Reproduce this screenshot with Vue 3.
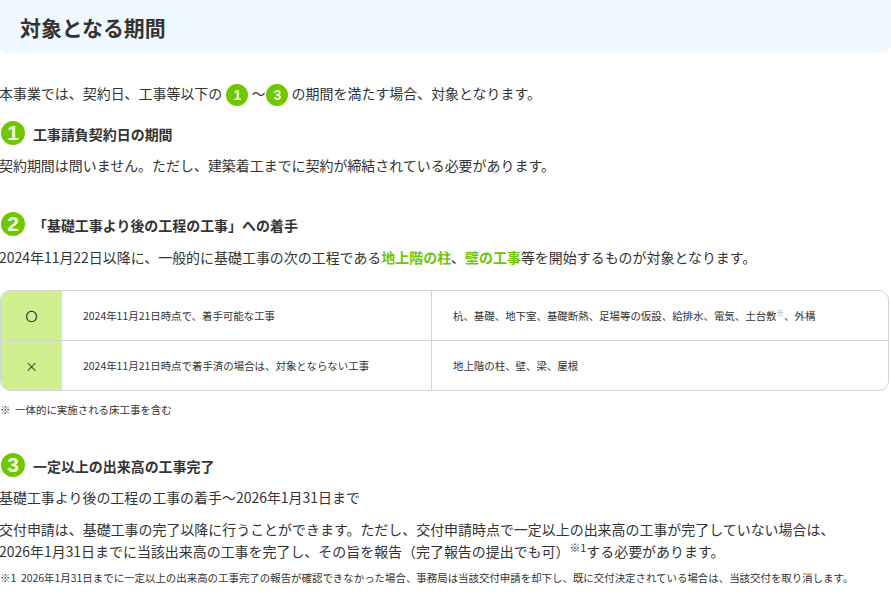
<script setup>
const rows = [
  { mark: '○', cls: 'ok', a: '2024年11月21日時点で、着手可能な工事', b: ['杭、基礎、地下室、基礎断熱、足場等の仮設、給排水、電気、土台敷', '、外構'] },
  { mark: '×', cls: 'ng', a: '2024年11月21日時点で着手済の場合は、対象とならない工事', b: ['地上階の柱、壁、梁、屋根', ''] },
]
</script>

<template>
  <main class="page">
    <h2 class="title">対象となる期間</h2>
    <p class="intro">本事業では、契約日、工事等以下の <span class="dot">1</span> 〜<span class="dot">3</span> の期間を満たす場合、対象となります。</p>

    <h3 class="head"><span class="num">1</span><span>工事請負契約日の期間</span></h3>
    <p class="body">契約期間は問いません。ただし、建築着工までに契約が締結されている必要があります。</p>

    <h3 class="head second"><span class="num">2</span><span>「基礎工事より後の工程の工事」への着手</span></h3>
    <p class="body">2024年11月22日以降に、一般的に基礎工事の次の工程である<b class="hl">地上階の柱</b>、<b class="hl">壁の工事</b>等を開始するものが対象となります。</p>

    <div class="table">
      <div v-for="r in rows" :key="r.mark" class="row">
        <div class="mark" :class="r.cls">{{ r.mark }}</div>
        <div class="cell">{{ r.a }}</div>
        <div class="cell last">{{ r.b[0] }}<sup v-if="r.b[1]" class="tiny">※</sup>{{ r.b[1] }}</div>
      </div>
    </div>
    <p class="note first">※ &nbsp;一体的に実施される床工事を含む</p>

    <h3 class="head third"><span class="num">3</span><span>一定以上の出来高の工事完了</span></h3>
    <p class="body">基礎工事より後の工程の工事の着手〜2026年1月31日まで</p>
    <p class="body para">交付申請は、基礎工事の完了以降に行うことができます。ただし、交付申請時点で一定以上の出来高の工事が完了していない場合は、<br>2026年1月31日までに当該出来高の工事を完了し、その旨を報告（完了報告の提出でも可）<sup class="ref">※1</sup>する必要があります。</p>
    <p class="note last-note">※1 &nbsp;2026年1月31日までに一定以上の出来高の工事完了の報告が確認できなかった場合、事務局は当該交付申請を却下し、既に交付決定されている場合は、当該交付を取り消します。</p>
  </main>
</template>

<style>
html, body { margin: 0; background: #fff; }
</style>

<style scoped>
.page {
  width: 891px;
  height: 592px;
  overflow: hidden;
  box-sizing: border-box;
  font-family: "Noto Sans CJK JP", "Noto Sans", sans-serif;
  color: #333;
  font-size: 13.96px;
  line-height: 24px;
}
p, h2, h3 { margin: 0; }
.title {
  height: 53px;
  line-height: 54px;
  padding-left: 20px;
  background: #eff7ff;
  border-radius: 0 0 8px 8px;
  font-size: 20.9px;
  font-weight: 700;
}
.intro { margin: 28px 0 0 -1px; white-space: nowrap; }
.dot {
  display: inline-flex;
  align-items: center;
  justify-content: center;
  width: 22px;
  height: 22px;
  margin-left: 1px;
  border-radius: 50%;
  background: #6fc700;
  color: #f4ffe0;
  font-family: "Liberation Sans", sans-serif;
  font-size: 14px;
  font-weight: 700;
  vertical-align: -1px;
}
.head {
  display: flex;
  align-items: center;
  gap: 8px;
  height: 24px;
  margin-top: 16px;
  font-size: 13.96px;
  font-weight: 700;
  padding-left: 1px;
}
.second { margin-top: 36px; }
.third { margin-top: 36px; }
.num {
  display: flex;
  align-items: center;
  justify-content: center;
  width: 24px;
  height: 24px;
  border-radius: 50%;
  background: #6fc700;
  color: #f4ffe0;
  font-family: "Liberation Sans", sans-serif;
  font-size: 21px;
  font-weight: 700;
  line-height: 1;
  margin-bottom: 3px;
}
.body { margin: 7px 0 0 -1px; white-space: nowrap; }
.second + .body { margin-top: 8px; }
.para { margin-top: 9px; line-height: 22px; }
.hl { color: #6fc700; font-weight: 700; }
.table {
  margin-top: 21px;
  width: 889px;
  box-sizing: border-box;
  border: 1px solid #d4d4d4;
  border-radius: 10px;
  overflow: hidden;
}
.row {
  display: grid;
  grid-template-columns: 61px 369px 1fr;
  height: 49px;
}
.row + .row { border-top: 1px solid #d4d4d4; }
.mark {
  display: flex;
  align-items: center;
  justify-content: center;
  background: #cfef91;
}
.ok { font-size: 11.5px; -webkit-text-stroke: 0.6px #333; }
.ng { font-size: 13px; }
.cell {
  display: flex;
  align-items: center;
  padding-left: 21px;
  font-size: 10.45px;
  white-space: nowrap;
}
.last { display: block; line-height: 49px; border-left: 1px solid #d4d4d4; }
.tiny { font-size: 7.5px; line-height: 0; color: #888; vertical-align: 4px; }
.ref { font-size: 10.8px; line-height: 0; vertical-align: baseline; position: relative; top: -5px; }
.note { font-size: 10.45px; line-height: 16px; white-space: nowrap; }
.first { margin-top: 11px; }
.last-note { margin-top: 8px; }
</style>
